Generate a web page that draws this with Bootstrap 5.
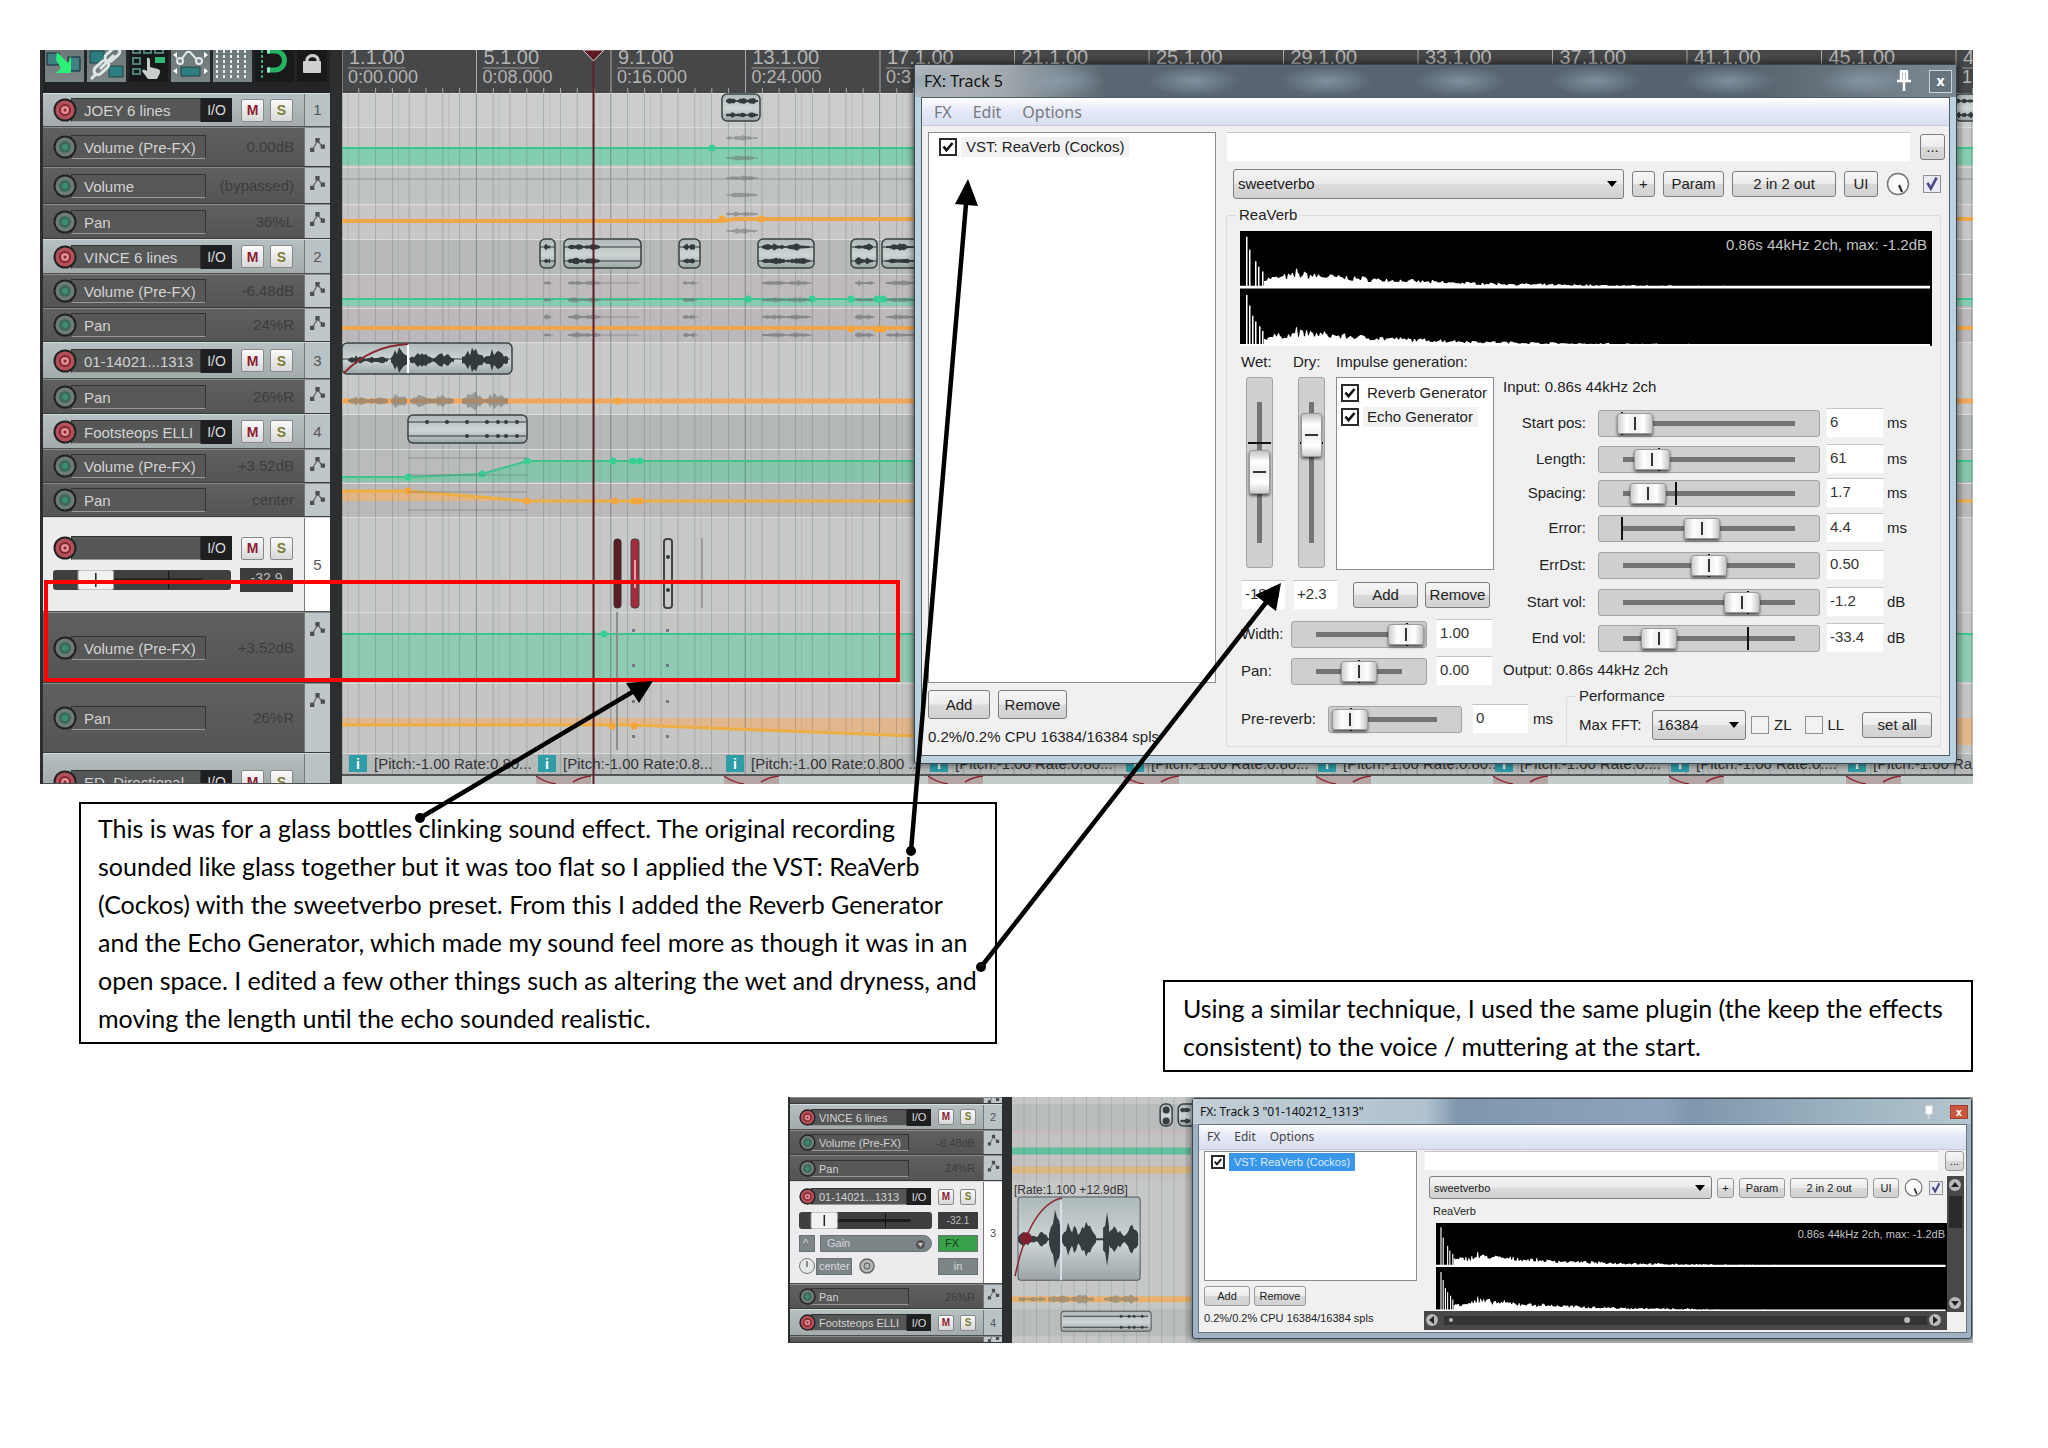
<!DOCTYPE html>
<html lang="en">
<head>
<meta charset="utf-8">
<meta name="viewport" content="width=device-width, initial-scale=1">
<title>Sound effects: ReaVerb on track 5</title>
<link rel="stylesheet" href="https://cdn.jsdelivr.net/npm/bootstrap@5.3.0/dist/css/bootstrap.min.css">
<style>
body{background:#fff;color:#000;font-family:"Liberation Sans",Arial,sans-serif;font-size:15px;line-height:20px}
.sheet{position:relative;padding:50px 75px 105px 40px;min-height:100vh}
.pointer-layer{position:absolute;left:0;top:0;width:100%;height:1448px;pointer-events:none;z-index:5}
.shot{position:relative;overflow:hidden;background:#2b2d2e}
.shot-main{height:734px}
.shot-small{height:246px;width:1185px;margin-top:25px;font-size:11px;line-height:14px}
.notes{padding-top:18px}
.note{margin:0;border:2px solid #000;background:#fff;font-family:Lato,Carlito,sans-serif;font-size:25px;line-height:38px;white-space:nowrap}
.note-a{width:918px;height:242px;padding:5px 17px;margin-left:39px}
.note-b{width:810px;height:92px;padding:7px 18px;margin-top:178px}

/* track panel */
.tcp{width:290px;padding-left:3px;flex:none}
.tools{height:43px;gap:3px;padding-left:2px;background:#222425;align-items:flex-start}
.tools button{width:39px;height:32px;flex:none;border:0;padding:0;background:linear-gradient(#6d7878,#7b8585)}
.tools .off{background:#17191a}
.tools .lock{width:30px}
.tools svg{display:block}
.trk{background:linear-gradient(#b6bfc2,#a3abad);border-top:1px solid #d5dcde;border-bottom:1px solid #4b4f50;overflow:hidden;flex:none}
.trk.env{background:linear-gradient(#606060,#545454);border-top-color:#8a8c8c;border-bottom-color:#3a3a3a}
.trk.sel{background:#ececee}
.trk .ctl{flex:1;padding-left:10px}
.trk .num{width:26px;flex:none;background:#b9c2c5;color:#555;border-left:1px solid #777}
.trk.env .num{background:#bfc7ca}
.trk.sel .num{background:#fff}
.led{width:24px;height:24px;flex:none;z-index:1}
.tname{height:24px;line-height:24px;width:130px;margin-left:-6px;padding-left:12px;background:#555757;color:#d3d3d3;border:1px solid #333;border-bottom-color:#999;white-space:nowrap;overflow:hidden}
.trk.env .tname{width:135px;background:#575757}
.io{width:31px;height:24px;border:0;padding:0;background:#1d1f20;color:#ddd;font-size:14px}
.ms{width:23px;height:23px;border:1px solid #888;border-radius:2px;padding:0;background:linear-gradient(#fafafa,#d8d8d8);font-weight:bold;font-size:14px;line-height:18px;color:#8c1c34}
.ms.solo{color:#7b7d34}
.tval{color:#3d3d3d;margin-left:auto;padding-right:10px}
.fader{height:20px;width:178px;background:#3f3f40;border-radius:3px}
.readout{width:53px;height:24px;background:#3c3c3d;color:#bbb;text-align:center;font-size:14px}
.divider-bar{width:12px;flex:none;background:#2c2e30}
.lane{flex:1;min-width:0;display:block;height:100%}

/* small panel */
.shot-small .tcp{width:214px;padding-left:2px}
.shot-small .ctl{padding-left:9px}
.shot-small .num{width:19px}
.shot-small .led{width:17px;height:17px}
.shot-small .tname{width:96px;height:17px;line-height:16px;margin-left:-5px;padding-left:7px}
.shot-small .env .tname{width:98px}
.shot-small .io{width:24px;height:17px;font-size:11px;line-height:14px}
.shot-small .ms{width:16px;height:16px;font-size:10px;line-height:12px}
.shot-small .tval{padding-right:8px}
.shot-small .fader{width:133px;height:17px}
.shot-small .readout{width:40px;height:17px;font-size:10px;line-height:17px}
.shot-small .divider-bar{width:10px}
.chip{height:17px;background:#7e8589;color:#d5d9dc;line-height:15px;border:1px solid #6b7275;padding:0 6px;font-size:11px;white-space:nowrap}
.chip.on{background:#3aa04c;color:#123d18}

/* effect window */
.win{position:absolute;display:flex;flex-direction:column;border:1px solid #39464f;background:#bcd3df;color:#222;box-shadow:0 0 6px 2px rgba(0,0,0,.45);border-radius:3px}
.win-main{left:874px;right:16px;top:14px;height:700px;padding:0 6px 7px}
.win-main>.face{border:1px solid #4d5c66}
.win-title{flex:none;height:32px;margin:0 -6px;padding:0 4px 0 9px;font-family:"Noto Sans",sans-serif;font-size:16px;color:#111;
 background:radial-gradient(ellipse 46px 15px at 50% 50%,rgba(142,163,180,.7),transparent) 77px 0/134px 32px repeat-x,linear-gradient(90deg,#b4b9bd 0,#a2a9ae 90px,#5a6772 190px,#56636e 80%,#7d8992)}
.face{flex:1;background:#f0f0f1;min-height:0}
.menu{height:28px;padding:0 12px;gap:21px;font-family:"Noto Sans",sans-serif;font-size:16px;background:linear-gradient(#fff,#e6eaf7 45%,#d9dff2);border-bottom:1px solid #c4c9d6}
.menu a{color:#77797f;text-decoration:none}
.xbtn{width:23px;height:23px;border:1px solid #ccd3d8;background:#66737e;color:#fff;padding:0;font-size:14px;line-height:18px;font-weight:bold}
.fx-body{padding:6px 4px 0 6px;gap:10px}
.fx-list{width:288px;flex:none}
.pane{background:#fff;border:1px solid #8b8d90}
.fx-list .pane{height:551px;padding:4px 10px;margin-bottom:7px}
.tag{background:#f2f2f2;padding:0 5px;white-space:nowrap}
.btn.wbtn{border:1px solid #7c7c7c;border-radius:3px;background:linear-gradient(#f6f6f6,#ececec 48%,#d9d9d9 52%,#d2d2d2);color:#222;padding:0;font-size:15px;line-height:20px;height:26px;white-space:nowrap}
.win-main .fx-list .wbtn{height:29px}
.form-check-input.tick{width:18px;height:18px;margin:0;border:2px solid #2a2a2a;border-radius:0;background-color:#fff;flex:none}
.form-check-input.tick:checked{background-color:#fff;background-image:url("data:image/svg+xml,%3Csvg xmlns='http://www.w3.org/2000/svg' viewBox='0 0 14 14'%3E%3Cpath fill='none' stroke='%23111' stroke-width='2.6' d='M2.5 6.5l3 3.8L11.500 3'/%3E%3C/svg%3E")}
.form-check-input.tick.soft{border:1px solid #8e8f8f;background-color:#f2f2f2}
.form-check-input.tick.soft:checked{background-color:#e9eaf2;background-image:url("data:image/svg+xml,%3Csvg xmlns='http://www.w3.org/2000/svg' viewBox='0 0 14 14'%3E%3Cpath fill='none' stroke='%234a4a86' stroke-width='2.4' d='M3 6l3 5L11 1.500'/%3E%3C/svg%3E")}
.form-control.fld{height:30px;padding:0 0 4px 3px;border:1px solid #f3f3f3;border-top-color:#c4c4c4;border-radius:0;background:#fff;color:#333;font-size:15px;line-height:20px;min-height:0;flex:none}
.form-select.combo{height:30px;padding:0 24px 0 4px;border:1px solid #7f7f7f;border-radius:3px;color:#222;font-size:15px;line-height:20px;
 background:url("data:image/svg+xml,%3Csvg xmlns='http://www.w3.org/2000/svg' viewBox='0 0 10 6'%3E%3Cpath d='M0 0h10l-5 6z'/%3E%3C/svg%3E") no-repeat right 6px center/10px 6px,linear-gradient(#f3f3f3,#ebebeb 48%,#dcdcdc 52%,#d0d0d0)}
fieldset.grp{border:1px solid #dcdcde;border-radius:3px;margin:0;min-width:0}
fieldset.grp>legend{float:none;width:auto;font-size:15px;line-height:20px;margin:0 0 0 9px;padding:0 3px}
.preset-row{padding:7px 4px 2px 7px}
.scope-wrap{padding:6px 8px 0 13px}
.scope{position:relative;background:#000;height:115px}
.scope svg{display:block;width:100%;height:100%}
.scope-txt{position:absolute;right:5px;top:4px;color:#c4c4c4}
.controls{padding-left:14px;gap:9px;margin-top:6px}
.rng{-webkit-appearance:none;appearance:none;height:27px;margin:0;border:1px solid #a3a3a3;border-radius:3px;flex:none;
 background:linear-gradient(#111,#111) no-repeat var(--tick) 1px/2px 23px,linear-gradient(#747474,#747474) no-repeat center/calc(100% - 48px) 5px,#cfcfcf}
.rng::-webkit-slider-runnable-track{height:25px;background:none}
.rng::-webkit-slider-thumb{-webkit-appearance:none;width:36px;height:21px;margin-top:2px;border:1px solid #9a9a9a;border-radius:3px;
 background:linear-gradient(#333,#333) no-repeat center/2px 13px,linear-gradient(90deg,#cfcfcf,#fff 25%,#eee 50%,#fff 75%,#c4c4c4);box-shadow:0 2px 3px rgba(0,0,0,.6)}
.upright{position:relative;width:27px;height:191px;margin-left:5px}
.upright .rng{position:absolute;left:0;top:100%;width:191px;transform-origin:0 0;transform:rotate(-90deg)}
.upright .rng::-webkit-slider-thumb{width:44px;box-shadow:-2px 0 3px rgba(0,0,0,.6)}
.gen-col{width:253px;height:334px}
.gen{display:grid;grid-template-columns:52px 43px 158px;grid-template-rows:20px 193px;row-gap:5px}
.params{display:grid;grid-template-rows:36px 34px 35px 37px 37px 36px 30px;margin-top:11px}
.params>div{height:30px}
.params label{width:83px;margin-right:12px;text-align:right}

/* small effect window */
.win-small{left:404px;right:1px;top:1px;height:241px;padding:0 4px 5px 5px;background:#9fb1c2}
.win-small .win-title{height:25px;margin:0 -4px 0 -5px;font-size:12px;padding:0 3px 0 7px;background:linear-gradient(90deg,#c3ced6,#b0c2cf 30%,#7f97ad 34%,#8da3bb 60%,#7f97ad 64%,#9eb5c3 85%,#b5c5cd)}
.win-small .face{border:1px solid #667480}
.win-small .menu{height:25px;font-size:12px;gap:14px;padding:0 8px}
.win-small .menu a{color:#444}
.win-small .xbtn{width:18px;height:14px;font-size:10px;line-height:10px;background:#c9573e;border-color:#a0402c}
.win-small .fx-body{padding:1px 2px 0 5px;gap:7px}
.win-small .fx-list{width:213px}
.win-small .fx-list .pane{height:130px;padding:1px 6px;margin-bottom:5px}
.win-small .tick{width:14px;height:14px}
.win-small .tag{background:#3a96e8;color:#d9ecff;line-height:18px}
.win-small .btn.wbtn{font-size:11px;height:20px;line-height:16px;border-color:#999}
.win-small .combo{font-size:11px;height:23px;line-height:16px}
.win-small .fld{height:20px}
.win-small .scope{height:88px;margin-left:12px}
.win-small .scope-txt{right:2px}
.sbar{background:#48484b}
</style>
</head>
<body>
<main class="sheet">
  <figure class="shot shot-main d-flex m-0" aria-label="Arrange view with the ReaVerb window of track 5">
    <div class="tcp d-flex flex-column">
      <div class="tools d-flex">
        <button aria-label="Move items"><svg width="39" height="32" viewBox="0 0 39 32"><path d="M2 3h12v12H2zM23 7h12v14H23z" fill="#3f8182" stroke="#123" /><path d="M12 2l11 11 3-7v17H11l5-5-5-8z" fill="#2cf07a"/></svg></button>
        <button aria-label="Group items"><svg width="39" height="32" viewBox="0 0 39 32"><path d="M3 1h14v12H3zM22 16h14v11H22z" fill="#2d7c80" stroke="#244"/><g fill="none" stroke="#dfe5e5" stroke-width="3"><rect x="17" y="1" width="17" height="8" rx="4" transform="rotate(-42 25 5)"/><rect x="6" y="14" width="17" height="8" rx="4" transform="rotate(-42 14 18)"/><path d="M13 19L27 5M4 29l5-5"/></g></svg></button>
        <button class="off" aria-label="Ripple edit"><svg width="39" height="32" viewBox="0 0 39 32"><g fill="none" stroke="#4d7f77" stroke-width="2"><path d="M4 0v3h7V0M15 0v3h7V0M26 0v3h8V0M4 8h7v6H4zM4 19h7v5H4z"/></g><path d="M26 7h10v6H26z" fill="#31b576"/><path d="M18 8q3-1 3 3v6l8 2q3 1 2 4l-3 6H19l-6-8q1-3 5 0z" fill="#c9cdcc"/></svg></button>
        <button aria-label="Envelopes"><svg width="39" height="32" viewBox="0 0 39 32"><path d="M9 11l7-9h3l8 9" fill="none" stroke="#e3e9e9" stroke-width="2"/><circle cx="9" cy="11" r="3" fill="#789" stroke="#e3e9e9" stroke-width="2"/><circle cx="28" cy="11" r="3" fill="#789" stroke="#e3e9e9" stroke-width="2"/><path d="M10 17h19v9H10z" fill="#2d7c80" stroke="#244"/><path d="M6 2v6L2 5zM6 18v6l-4-3zM33 2v6l4-3zM33 18v6l4-3z" fill="#fff"/></svg></button>
        <button aria-label="Grid"><svg width="39" height="32" viewBox="0 0 39 32"><path d="M4 0v28M11 0v28M18 0v28M25 0v28M32 0v28" stroke="#e8eded" stroke-width="2" stroke-dasharray="3 2"/></svg></button>
        <button class="off" aria-label="Snap"><svg width="39" height="32" viewBox="0 0 39 32"><path d="M7 0v28" stroke="#3aa568" stroke-width="2" stroke-dasharray="3 2"/><path d="M12 1h8a9 9 0 0 1 0 19h-8" fill="none" stroke="#27b263" stroke-width="5"/><path d="M12 1h3M12 20h3" stroke="#a8e6c4" stroke-width="5"/></svg></button>
        <button class="off lock" aria-label="Lock"><svg width="30" height="32" viewBox="0 0 30 32"><path d="M10 12V9a6 6 0 0 1 11 0v3" fill="none" stroke="#cfcfcf" stroke-width="3"/><rect x="6" y="11" width="18" height="12" rx="1" fill="#cfcfcf"/></svg></button>
      </div>
      <div id="tracksMain"></div>
    </div>
    <div class="divider-bar"></div>
    <svg class="lane" id="laneMain" viewBox="342 50 1631 734" preserveAspectRatio="xMinYMin slice" font-family="Liberation Sans"></svg>

    <section class="win win-main">
      <header class="win-title d-flex align-items-center"><span class="me-auto">FX: Track 5</span>
        <svg width="18" height="22" viewBox="0 0 18 22" class="me-3"><path d="M5 1h8M6 1v9M12 1v9M9 1v10M2 11h14M9 11v10" stroke="#fff" stroke-width="2.500" fill="none"/></svg>
        <button class="xbtn" aria-label="Close">x</button></header>
      <div class="face">
        <nav class="menu d-flex align-items-center"><a href="#">FX</a><a href="#">Edit</a><a href="#">Options</a></nav>
        <div class="fx-body d-flex">
          <div class="fx-list">
            <div class="pane"><div class="d-flex align-items-center gap-1"><input class="form-check-input tick" type="checkbox" id="vst" checked><label class="tag" for="vst">VST: ReaVerb (Cockos)</label></div></div>
            <div class="d-flex gap-2"><button class="btn wbtn" style="width:62px">Add</button><button class="btn wbtn" style="width:69px">Remove</button></div>
            <div class="mt-2 text-nowrap">0.2%/0.2% CPU 16384/16384 spls</div>
          </div>
          <div class="flex-grow-1">
            <div class="d-flex" style="gap:9px"><input class="form-control fld flex-fill w-auto" aria-label="Comment"><button class="btn wbtn" style="width:25px;margin-top:2px">...</button></div>
            <div class="preset-row d-flex align-items-center gap-2">
              <select class="form-select combo flex-fill w-auto" aria-label="Preset"><option>sweetverbo</option></select>
              <button class="btn wbtn" style="width:23px">+</button><button class="btn wbtn" style="width:61px">Param</button><button class="btn wbtn" style="width:104px">2 in 2 out</button><button class="btn wbtn" style="width:34px">UI</button>
              <svg width="25" height="25" viewBox="0 0 25 25"><circle cx="12" cy="12" r="10.500" fill="#fbfbfb" stroke="#777" stroke-width="1.500"/><path d="M13 13l3 7" stroke="#222" stroke-width="2"/></svg>
              <input class="form-check-input tick soft ms-1" type="checkbox" checked aria-label="Enabled">
            </div>
            <fieldset class="grp mt-1 ms-0 me-1"><legend>ReaVerb</legend>
              <div class="scope-wrap">
                <div class="scope"><svg id="scopeA" viewBox="0 0 692 122" preserveAspectRatio="none"></svg><span class="scope-txt">0.86s 44kHz 2ch, max: -1.2dB</span></div>
              </div>
              <div class="controls d-flex">
                <div class="gen-col">
                  <div class="gen">
                    <label for="wet">Wet:</label><label for="dry">Dry:</label><span class="text-nowrap">Impulse generation:</span>
                    <div class="upright"><input class="rng" id="wet" type="range" value="50" style="--tick:66%"></div>
                    <div class="upright"><input class="rng" id="dry" type="range" value="76" style="--tick:66%"></div>
                    <div class="pane" style="padding:5px 4px">
                      <div class="d-flex align-items-center gap-1 overflow-hidden"><input class="form-check-input tick" type="checkbox" id="rg" checked><label class="text-nowrap ps-1" for="rg">Reverb Generator</label></div>
                      <div class="d-flex align-items-center gap-1 mt-1"><input class="form-check-input tick" type="checkbox" id="eg" checked><label class="tag ps-1" for="eg">Echo Generator</label></div>
                    </div>
                  </div>
                  <div class="d-flex align-items-center" style="margin-top:10px;gap:7px"><input class="form-control fld" style="width:45px" value="-18.0" aria-label="Wet dB"><input class="form-control fld" style="width:45px" value="+2.3" aria-label="Dry dB"><button class="btn wbtn ms-2" style="width:65px">Add</button><button class="btn wbtn" style="width:65px">Remove</button></div>
                  <div class="d-flex align-items-center" style="margin-top:9px"><label for="wd" style="width:50px">Width:</label><input class="rng" id="wd" type="range" value="98" style="width:136px;--tick:86%"><input class="form-control fld" style="width:57px;margin-left:9px" value="1.00" aria-label="Width value"></div>
                  <div class="d-flex align-items-center" style="margin-top:7px"><label for="pn" style="width:50px">Pan:</label><input class="rng" id="pn" type="range" value="50" style="width:136px;--tick:50%"><input class="form-control fld" style="width:57px;margin-left:9px" value="0.00" aria-label="Pan value"></div>
                </div>
                <div style="padding-top:25px">
                  <div>Input: 0.86s 44kHz 2ch</div>
                  <div class="params" id="params"></div>
                  <div style="margin-top:7px">Output: 0.86s 44kHz 2ch</div>
                </div>
              </div>
              <div class="d-flex" style="padding-left:14px;height:60px">
                <div class="d-flex align-items-center" style="width:325px;height:30px;margin-top:18px"><label for="pre" style="width:87px">Pre-reverb:</label><input class="rng" id="pre" type="range" value="3" style="width:134px;--tick:16%"><input class="form-control fld" style="width:57px;margin:0 4px 0 10px" value="0" aria-label="Pre-reverb value">ms</div>
                <fieldset class="grp flex-fill border-end-0 border-bottom-0"><legend>Performance</legend>
                  <div class="d-flex align-items-center" style="padding-left:12px;margin-top:4px"><label for="fft" style="width:73px">Max FFT:</label><select class="form-select combo" id="fft" style="width:94px"><option>16384</option></select>
                  <input class="form-check-input tick soft" style="margin:0 5px" type="checkbox" id="zl"><label for="zl">ZL</label><input class="form-check-input tick soft" style="margin:0 5px 0 13px" type="checkbox" id="ll"><label for="ll">LL</label><button class="btn wbtn" style="width:70px;margin-left:18px">set all</button></div>
                </fieldset>
              </div>
            </fieldset>
          </div>
        </div>
      </div>
    </section>
  </figure>

  <div class="notes d-flex justify-content-between">
    <p class="note note-a">This is was for a glass bottles clinking sound effect. The original recording<br>sounded like glass together but it was too flat so I applied the VST: ReaVerb<br>(Cockos) with the sweetverbo preset. From this I added the Reverb Generator<br>and the Echo Generator, which made my sound feel more as though it was in an<br>open space. I edited a few other things such as altering the wet and dryness, and<br>moving the length until the echo sounded realistic.</p>
    <p class="note note-b">Using a similar technique, I used the same plugin (the keep the effects<br>consistent) to the voice / muttering at the start.</p>
  </div>

  <figure class="shot shot-small d-flex ms-auto mb-0 me-0" aria-label="ReaVerb on track 3">
    <div class="tcp"><div id="tracksSmall"></div></div>
    <div class="divider-bar"></div>
    <svg class="lane" id="laneSmall" viewBox="1012 1097 960 246" preserveAspectRatio="xMinYMin slice" font-family="Liberation Sans"></svg>
    <section class="win win-small">
      <header class="win-title d-flex align-items-center"><span class="me-auto">FX: Track 3 "01-140212_1313"</span>
        <svg width="10" height="14" viewBox="0 0 10 14" class="me-3"><path d="M2 1h6v8H2zM5 9v5" fill="#fff" stroke="#eee"/></svg>
        <button class="xbtn" aria-label="Close">x</button></header>
      <div class="face">
        <nav class="menu d-flex align-items-center"><a href="#">FX</a><a href="#">Edit</a><a href="#">Options</a></nav>
        <div class="fx-body d-flex">
          <div class="fx-list">
            <div class="pane"><div class="d-flex align-items-center gap-1"><input class="form-check-input tick" type="checkbox" id="vst3" checked><label class="tag" for="vst3">VST: ReaVerb (Cockos)</label></div></div>
            <div class="d-flex gap-1"><button class="btn wbtn" style="width:46px">Add</button><button class="btn wbtn" style="width:52px">Remove</button></div>
            <div class="text-nowrap" style="margin-top:5px">0.2%/0.2% CPU 16384/16384 spls</div>
          </div>
          <div class="flex-grow-1">
            <div class="d-flex" style="gap:6px"><input class="form-control fld flex-fill w-auto" aria-label="Comment"><button class="btn wbtn" style="width:19px">...</button></div>
            <div class="d-flex" style="margin-top:5px">
              <div class="flex-fill">
                <div class="d-flex align-items-center" style="gap:5px;padding:0 4px 0 5px">
                  <select class="form-select combo flex-fill w-auto" aria-label="Preset"><option>sweetverbo</option></select>
                  <button class="btn wbtn" style="width:17px">+</button><button class="btn wbtn" style="width:46px">Param</button><button class="btn wbtn" style="width:78px">2 in 2 out</button><button class="btn wbtn" style="width:26px">UI</button>
                  <svg width="20" height="20" viewBox="0 0 25 25"><circle cx="12" cy="12" r="10.500" fill="#fbfbfb" stroke="#777" stroke-width="1.500"/><path d="M13 13l3 7" stroke="#222" stroke-width="2"/></svg>
                  <input class="form-check-input tick soft" type="checkbox" checked aria-label="Enabled">
                </div>
                <div style="padding:5px 0 5px 9px">ReaVerb</div>
                <div class="scope"><svg id="scopeB" viewBox="0 0 692 122" preserveAspectRatio="none"></svg><span class="scope-txt">0.86s 44kHz 2ch, max: -1.2dB</span></div>
                <svg class="d-block sbar" width="100%" height="19" viewBox="0 0 524 19"><path d="M20 5h484v9H20z" fill="#343437"/><g fill="#b9b9bb"><circle cx="8" cy="9" r="6"/><circle cx="512" cy="9" r="6"/><circle cx="27" cy="9" r="2"/><circle cx="484" cy="9" r="3"/></g><path d="M10 5v8L5 9zM510 5v8l5-4z" fill="#222"/></svg>
              </div>
              <svg class="sbar" width="17" height="136" viewBox="0 0 17 136"><path d="M2 20h13v32H2z" fill="#2b2b2e"/><g fill="#b9b9bb"><circle cx="8" cy="9" r="6"/><circle cx="8" cy="127" r="6"/></g><path d="M4 11h8L8 6zM4 125h8l-4 5z" fill="#222"/></svg>
            </div>
          </div>
        </div>
      </div>
    </section>
  </figure>

  <svg class="pointer-layer" viewBox="0 0 2048 1448" preserveAspectRatio="none">
    <rect x="46" y="582" width="852" height="98" fill="none" stroke="#f00" stroke-width="4"/>
    <g stroke="#000" stroke-width="4.500"><path d="M420 818L634 691M911 851L966 204M981 967L1268 600"/></g>
    <path d="M653 681l-27 2 13 20zM968 179l-13 25 23 2zM1281 583l-26 12 21 16z"/>
    <circle cx="420" cy="818" r="5"/><circle cx="911" cy="851" r="5"/><circle cx="981" cy="967" r="5"/>
  </svg>
</main>
<script src="https://cdn.jsdelivr.net/npm/bootstrap@5.3.0/dist/js/bootstrap.bundle.min.js"></script>
<script>
let seed = 7;
const rnd = () => (seed = (seed * 16807) % 2147483647) / 2147483647;

/* ---- track panels ---- */
const led = c => `<svg class="led" viewBox="0 0 24 24"><circle cx="12" cy="12" r="11.500" fill="#222"/><circle cx="12" cy="12" r="9.500" fill="${c ? '#b4505a' : '#6f7b77'}"/><circle cx="12" cy="12" r="6" fill="${c ? '#7c2733' : '#3e6a5c'}"/><circle cx="12" cy="12" r="${c ? 4 : 3}" fill="${c ? '#e58d92' : '#3a8d70'}"/>${c ? '<circle cx="12" cy="12" r="1.500" fill="#7c2733"/>' : ''}</svg>`;
const envIcon = s => `<svg width="${s}" height="${s}" viewBox="0 0 16 16"><path d="M3 12L8 4l5 5" fill="none" stroke="#666" stroke-width="1.200"/><path d="M1 10h4v4H1zM6 1h4v4H6zM11 7h4v4h-4z" fill="#4c4f50"/></svg>`;
const main = (h, n, num) => ({h, n, num}), env = (h, n, v) => ({h, n, v});
const head = (t, g) => `${led(1)}<span class="tname">${t.n}</span><button class="io">I/O</button><button class="ms" style="margin-left:${g}px" aria-label="Mute">M</button><button class="ms solo" style="margin-left:6px" aria-label="Solo">S</button>`;
function row(t, small) {
  const g = small ? 7 : 9;
  if (t.v !== undefined) return `<div class="trk env d-flex" style="height:${t.h}px"><div class="ctl d-flex align-items-center">${t.n ? led(0) + `<span class="tname">${t.n}</span><span class="tval">${t.v}</span>` : ''}</div><div class="num d-flex justify-content-center ${t.h > 50 ? 'pt-2' : 'align-items-center pb-1'}">${envIcon(small ? 13 : 17)}</div></div>`;
  if (t.body) return `<div class="trk sel d-flex" style="height:${t.h}px"><div class="ctl">${t.body}</div><div class="num d-flex justify-content-center align-items-center">${t.num}</div></div>`;
  return `<div class="trk d-flex" style="height:${t.h}px"><div class="ctl d-flex ${t.top ? 'pt-3' : 'align-items-center'}">${head(t, g)}</div><div class="num d-flex justify-content-center align-items-center">${t.num}</div></div>`;
}
const knob = (w, x, h) => `<svg class="fader" viewBox="0 0 ${w} ${h}"><path d="M${w*.15} ${h/2}H${w*.84}" stroke="#1d1d1d" stroke-width="3"/><path d="M${w*.65} 1V${h-1}" stroke="#111"/><rect x="${x}" y="0" width="${w*.2}" height="${h}" rx="2" fill="#f2f2f2" stroke="#999"/><path d="M${x+w*.1} 3V${h-3}" stroke="#222" stroke-width="1.500"/></svg>`;
document.getElementById('tracksMain').innerHTML = [
  main(34,'JOEY 6 lines',1), env(40,'Volume (Pre-FX)','0.00dB'), env(37,'Volume','(bypassed)'), env(35,'Pan','36%L'),
  main(35,'VINCE 6 lines',2), env(34,'Volume (Pre-FX)','-6.48dB'), env(34,'Pan','24%R'),
  main(37,'01-14021...1313',3), env(35,'Pan','26%R'), main(35,'Footsteops ELLI',4), env(34,'Volume (Pre-FX)','+3.52dB'), env(34,'Pan','center'),
  {h:95, num:5, body:`<div class="d-flex align-items-center" style="margin-top:18px">${head({n:''},9)}</div><div class="d-flex align-items-center" style="margin-top:8px">${knob(178,25,20)}<span class="readout" style="margin-left:9px">-32.9</span></div>`},
  env(71,'Volume (Pre-FX)','+3.52dB'), env(70,'Pan','26%R'), {h:31,n:'ED&nbsp; Directional',num:'',top:1}
].map(t => row(t)).join('');
document.getElementById('tracksSmall').innerHTML = [
  env(7,'',''), main(26,'VINCE 6 lines',2), env(25,'Volume (Pre-FX)','-6.48dB'), env(26,'Pan','24%R'),
  {h:103, num:3, body:`<div class="d-flex align-items-center" style="margin-top:6px">${head({n:'01-14021...1313'},7)}</div>
   <div class="d-flex" style="margin-top:7px">${knob(133,12,17)}<span class="readout" style="margin-left:6px">-32.1</span></div>
   <div class="d-flex" style="margin-top:6px"><span class="chip" style="width:16px;padding:0 3px">^</span><span class="chip d-flex justify-content-between rounded-end-pill" style="width:112px;margin-left:5px">Gain<svg width="9" height="9" viewBox="0 0 9 9" class="mt-1"><circle cx="4.500" cy="4.500" r="4.500" fill="#555"/><path d="M2 3h5L4.500 7z" fill="#ccc"/></svg></span><span class="chip on" style="width:40px;margin-left:6px">FX</span></div>
   <div class="d-flex" style="margin-top:6px"><svg width="17" height="17" viewBox="0 0 17 17"><circle cx="8" cy="8" r="7.500" fill="#e4e8e8" stroke="#777"/><path d="M8 3v6" stroke="#333"/></svg><span class="chip" style="width:36px;padding:0 2px">center</span><svg width="17" height="17" viewBox="0 0 17 17" style="margin-left:7px"><circle cx="8" cy="8" r="7" fill="#b5b9ba" stroke="#666" stroke-width="1.500"/><circle cx="8" cy="8" r="3" fill="none" stroke="#555"/></svg><span class="chip text-center" style="width:40px;margin-left:62px">in</span></div>`},
  env(25,'Pan','26%R'), main(27,'Footsteops ELLI',4), env(7,'','')
].map(t => row(t, 1)).join('');

/* ---- reverb parameters ---- */
const P = [['Start pos:',10,10,'6','ms'],['Length:',19,27,'61','ms'],['Spacing:',17,35,'1.7','ms'],['Error:',46,10,'4.4','ms'],['ErrDst:',50,50,'0.50',''],['Start vol:',68,68,'-1.2','dB'],['End vol:',23,68,'-33.4','dB']];
document.getElementById('params').innerHTML = P.map(([l,v,t,x,u],i) => `<div class="d-flex align-items-center"><label for="p${i}">${l}</label><input class="rng" id="p${i}" type="range" value="${v}" style="width:222px;--tick:${t}%"><input class="form-control fld" style="width:58px;margin:0 3px 0 6px" value="${x}" aria-label="${l} value">${u}</div>`).join('');

/* ---- impulse response display ---- */
function scope(id) {
  let d = '';
  for (const [base, spikes] of [[60,[[6,54],[9,40],[15,28],[18,22],[22,17]]],[122,[[6,54],[9,43],[12,32],[15,26],[19,21],[22,16]]]]) {
    for (const [x,h] of spikes) d += `M${x} ${base-h}h1.500V${base}h-1.500z`;
    d += `M24 ${base}`;
    for (let x = 24; x < 692; x += 2) {
      const e = x < 60 ? 8 + (x-24)*.12 : 13 * Math.exp(-(x-60)/140);
      const h = x === 56 ? 20 : e * (.7 + rnd()*.6) + (x < 560 ? rnd()*1.500 : 0);
      d += `L${x} ${base-h}h1`;
    }
    d += `V${base}zM0 ${base-2}H690v3H0z`;
  }
  document.getElementById(id).innerHTML = `<path d="${d}" fill="#fff"/>`;
}
scope('scopeA'); scope('scopeB');

/* ---- arrange lanes ---- */
const R = (x,y,w,h,f,o='') => `<rect x="${x}" y="${y}" width="${w}" height="${h}" fill="${f}" ${o}/>`;
const L = (d,c,w=1) => `<path d="${d}" stroke="${c}" stroke-width="${w}" fill="none"/>`;
function blob(x0,x1,cy,a,c,bursts=3) {
  let up = '', dn = '';
  for (let x = x0; x <= x1; x += 2) {
    const p = (x-x0)/(x1-x0), h = Math.max(.5, a * (.3 + .7*Math.abs(Math.sin(p*Math.PI*bursts))) * (.35+rnd()*.65));
    up += `L${x} ${cy-h}`; dn = `L${x} ${cy+h}` + dn;
  }
  return `<path d="M${x0} ${cy}${up}${dn}z" fill="${c}"/>`;
}
const item = (x,y,w,h) => R(x,y,w,h,'url(#ig)','rx="5" stroke="#3a4242" stroke-width="1.500"');
const dots = (ps,c) => ps.map(([x,y]) => `<circle cx="${x}" cy="${y}" r="3.500" fill="${c}"/>`).join('');
const grad = '<defs><linearGradient id="ig" x2="0" y2="1"><stop offset="0" stop-color="#aeb9b9"/><stop offset=".55" stop-color="#ccd6d5"/><stop offset="1" stop-color="#9aa5a5"/></linearGradient></defs>';
{
  let s = grad + R(342,50,1631,734,'#c5c7c6');
  for (const [y,h,c] of [[93,34,'#cbcdcc'],[127,40,'#c6c8c6'],[167,37,'#bfc4c2'],[204,35,'#c8c6c7'],[239,35,'#b7bab9'],[274,34,'#bfbabd'],[308,34,'#bcb8bb'],[342,72,'#c8cac9'],[414,35,'#b5b8b8'],[449,34,'#b9bcba'],[483,34,'#bcb9bb'],[517,95,'#c7c9c8'],[612,71,'#c4c6c4'],[683,70,'#c5c6c4'],[753,31,'#b7babb']]) s += R(342,y,1631,h,c) + R(342,y,1631,1,'#dcdedd');
  /* filled envelopes */
  s += R(342,148,1631,17,'#85cdb0') + R(342,299,1631,7,'#86cdb2') + R(342,634,1631,48,'#8fcab2');
  s += `<path d="M342 477H408L482 474 527 461H1973V482H342z" fill="#86c5aa"/><path d="M342 490H408L527 501H342z" fill="#e3b584"/><path d="M342 718H1973V745L914 736 633 726H342z" fill="#e2b78d"/>`;
  for (let i = 0; i <= 97; i++) { const x = 342 + i*16.8; s += L(`M${x} 93V784`, i % 8 ? 'rgba(80,90,90,.28)' : 'rgba(60,70,70,.42)'); if (i%3===0) s += L(`M${x+6} 93V784`,'rgba(80,90,90,.13)'); }
  s += L('M342 148H1973M342 299H1973M342 634H1973M342 477H408L482 474 527 461H1973','#3fc48f',2) + L('M342 179H1973','#8e9695');
  s += L('M342 221H722L735 219H1973M342 328H1973','#eda64a',4) + L('M342 401H1973','#f0a75c',5) + L('M342 491H408L527 501H1973M342 725H633L914 736','#ecae45',3);
  s += dots([[712,148],[748,299],[812,299],[851,299],[877,299],[883,299],[408,477],[482,474],[527,461],[613,461],[633,461],[640,461],[604,634]],'#37cf94');
  s += dots([[722,219],[761,219],[851,329],[877,329],[883,329],[618,401],[408,491],[527,501],[615,501],[634,501],[640,501],[612,726],[634,726]],'#f2a63c');
  /* media items */
  const g = 'rgba(110,115,115,.55)', k = '#333a3b';
  s += item(722,94,38,27) + blob(726,758,101,3.500,k) + blob(726,758,115,3,k);
  for (const y of [138,158,178,195,214,231]) s += blob(726,758,y,3,g,1);
  for (const [x,w] of [[540,15],[564,77],[679,21],[758,56],[851,26],[882,60]]) {
    s += item(x,239,w,29) + L(`M${x} 247h${w}M${x} 261h${w}`,k);
    const e = w === 77 ? x+36 : x+w-4;
    for (const y of [247,261]) s += blob(x+4,e,y,4,k,2);
    for (const y of [283,300,317,335]) s += blob(x+4,e,y,3,g,2) + L(`M${x+4} ${y}h${w-6}`,g);
  }
  s += item(342,343,170,31) + L('M342 359H510',k) + blob(348,388,360,5,k,2) + blob(391,408,360,13,k,1) + blob(410,454,360,8,k,2) + blob(462,508,360,13,k,2) + L('M344 373Q370 346 408 344','#8c2a34',2) + L('M408 345V373','#fff',2);
  s += blob(348,388,401,5,g,2) + blob(391,408,401,10,g,1) + blob(410,454,401,7,g,2) + blob(462,508,401,10,g,2);
  s += item(408,415,119,28) + L('M408 422H526M408 436H526',k);
  for (const x of [427,447,467,487,498,506,517]) s += dots([[x,422]],k).replace('3.500','2') + (x>460 ? dots([[x,436]],k).replace('3.500','2') : '');
  s += L('M408 458H527M408 475H527M408 492H527M408 510H527',g);
  s += R(614,539,7,69,'#5c1c26','rx="3" stroke="#333"') + R(631,539,8,69,'#a32b3d','rx="3" stroke="#444"') + R(634,560,2,28,'#e6a0aa') + R(664,539,8,69,'#c9cccb','rx="3" stroke="#444" stroke-width="2"') + dots([[668,557],[668,590]],k).replaceAll('3.500','2') + L('M702 538V608','#777') + L('M617 612V750','#8a8f8e',2);
  for (const [x,y] of [[633,630],[667,630],[633,665],[667,665],[633,701],[667,701],[633,736],[667,736]]) s += R(x-1,y-1,3,3,'#778');
  /* stacked clips with their labels */
  const lab = [[349,'[Pitch:-1.00 Rate:0.80...'],[538,'[Pitch:-1.00 Rate:0.8...'],[726,'[Pitch:-1.00 Rate:0.800 ...'],[930,'[Pitch:-1.00 Rate:0.80...'],[1126,'[Pitch:-1.00 Rate:0.80...'],[1318,'[Pitch:-1.00 Rate:0.80...'],[1495,'[Pitch:-1.00 Rate:0....'],[1671,'[Pitch:-1.00 Rate:0....'],[1848,'[Pitch:-1.00 Ra']];
  s += R(342,775,1631,9,'#c3cbcb') + L('M342 775H1973','#333',1.500);
  for (const [x,t] of lab) s += R(x,755,18,17,'#2f9da5') + `<text x="${x+7}" y="769" font-size="14" font-weight="bold" fill="#fff">i</text><text x="${x+25}" y="769" font-size="15" fill="#333">${t}</text>` + (x > 400 ? R(x-2,776,55,8,'#b5a6a6') + L(`M${x-2} 776q8 6 20 8M${x+53} 776q-10 1-18 6`,'#8c2a34',1.500) : '');
  /* right-hand slice of clips */
  s += item(1955,94,30,27) + blob(1955,1973,101,4,k) + blob(1955,1973,115,4,k);
  /* ruler */
  s += R(342,50,1631,43,'#464748');
  const times = {0:'0:00.000',1:'0:08.000',2:'0:16.000',3:'0:24.000',4:'0:3',12:'1'};
  for (let i = 0; i <= 12; i++) {
    const x = 342 + i*134.500;
    s += L(`M${x} 50V93`,'#aaa') + `<text x="${x+7}" y="64" font-size="20" fill="#b4b4b4">${i*4+1}.1.00</text>`;
    s += L(`M${x+6} 68h${i>2?68:57}`,'#999') + (times[i] ? `<text x="${x+6}" y="83" font-size="18" fill="#b4b4b4">${times[i]}</text>` : '');
    for (let j = 1; j < 8; j++) s += L(`M${x+j*16.8} 88V93`,'#aaa');
  }
  s += L('M593.500 60V784','#5e2029',2) + '<path d="M583 50H604L593.500 61z" fill="#5e1a22" stroke="#ddd"/>';
  document.getElementById('laneMain').innerHTML = s;
}
{
  const k = '#353d40', g = 'rgba(110,115,115,.5)';
  let s = R(1012,1097,960,246,'#c6c8c8') + R(1012,1104,960,26,'#b9bcbd') + R(1012,1130,960,51,'#c3c1c2') + R(1012,1309,960,27,'#b9bcbd');
  s += L('M1012 1132H1191','#d9a9ae') + L('M1012 1151H1191','#62bf9c',7) + L('M1012 1170H1191','#dcb982',7) + L('M1012 1299H1191','#eab26c',6);
  for (let i = 0; i < 15; i++) s += L(`M${1024+i*12.500} 1097V1343`,'rgba(80,90,90,.2)');
  s += item(1160,1104,12,22) + item(1178,1104,22,22) + dots([[1166,1110],[1166,1121]],k) + blob(1180,1191,1110,3,k) + blob(1180,1191,1121,3,k);
  s += `<text x="1014" y="1194" font-size="12" fill="#333">[Rate:1.100 +12.9dB]</text>` + R(1018,1197,122,83,'url(#ig)','rx="3" stroke="#556"');
  s += L('M1018 1239H1138',k,2) + blob(1018,1048,1239,8,k,2) + blob(1049,1061,1239,32,k,1) + blob(1062,1096,1239,18,k,2) + blob(1103,1110,1239,38,k,1) + blob(1108,1139,1239,18,k,2);
  s += L('M1015 1276Q1030 1205 1062 1198','#8c2a34',1.500) + L('M1061 1200V1280','#dde',2) + '<circle cx="1026" cy="1238" r="6" fill="#7c2030"/>';
  s += blob(1018,1046,1299,3,g) + blob(1048,1094,1299,5,g,2) + blob(1104,1138,1299,5,g,2);
  s += R(1061,1311,90,20,'url(#ig)','rx="3" stroke="#555"') + L('M1063 1316H1148M1063 1327H1148',k);
  for (const x of [1121,1129,1134,1142]) s += dots([[x,1316],[x,1327]],k).replaceAll('3.500','1.500');
  document.getElementById('laneSmall').innerHTML = s;
}
</script>
</body>
</html>
